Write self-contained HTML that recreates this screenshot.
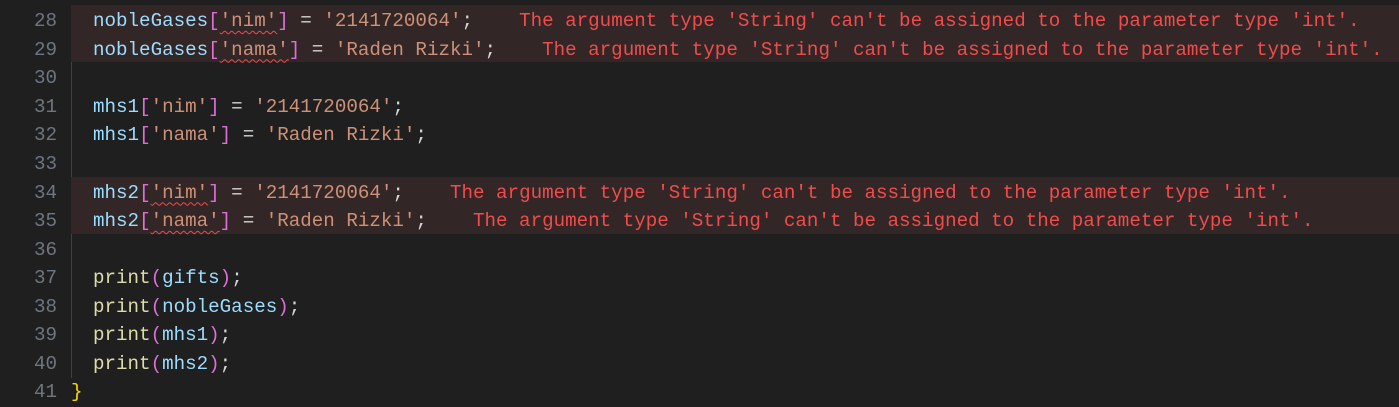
<!DOCTYPE html>
<html><head><style>
body{margin:0;background:#1f1f1f;width:1399px;height:405px;overflow:hidden;font-family:"Liberation Mono",monospace;font-size:19.2px;}
.l{position:absolute;left:0;width:1399px;height:28.55px;line-height:28.55px;white-space:pre;}
.n{position:absolute;left:0;width:57px;text-align:right;color:#6e7681;}
.c{position:absolute;left:93px;color:#d4d4d4;}
.hl{position:absolute;left:71px;right:0;height:28.55px;background:#332626;}
.g{position:absolute;left:71px;width:1px;background:#404040;top:7px;height:371px;}
.v{color:#9cdcfe}.s{color:#ce9178}.b{color:#da70d6}.f{color:#dcdcaa}.y{color:#ffd700}
.e{color:#f14c4c}
.w{text-decoration:underline wavy #f14c4c;text-decoration-thickness:1px;text-underline-offset:4px;}
</style></head><body>
<div class="g"></div>
<div class="hl" style="top:5px"></div><div class="hl" style="top:33.5px"></div>
<div class="hl" style="top:176.5px"></div><div class="hl" style="top:205px"></div>
<div class="l" style="top:7px"><span class="n">28</span><span class="c"><span class="v">nobleGases</span><span class="b">[</span><span class="s w">'nim'</span><span class="b">]</span> = <span class="s">'2141720064'</span>;    <span class="e">The argument type 'String' can't be assigned to the parameter type 'int'.</span></span></div>
<div class="l" style="top:35.5px"><span class="n">29</span><span class="c"><span class="v">nobleGases</span><span class="b">[</span><span class="s w">'nama'</span><span class="b">]</span> = <span class="s">'Raden Rizki'</span>;    <span class="e">The argument type 'String' can't be assigned to the parameter type 'int'.</span></span></div>
<div class="l" style="top:64px"><span class="n">30</span></div>
<div class="l" style="top:92.5px"><span class="n">31</span><span class="c"><span class="v">mhs1</span><span class="b">[</span><span class="s">'nim'</span><span class="b">]</span> = <span class="s">'2141720064'</span>;</span></div>
<div class="l" style="top:121px"><span class="n">32</span><span class="c"><span class="v">mhs1</span><span class="b">[</span><span class="s">'nama'</span><span class="b">]</span> = <span class="s">'Raden Rizki'</span>;</span></div>
<div class="l" style="top:149.5px"><span class="n">33</span></div>
<div class="l" style="top:178.5px"><span class="n">34</span><span class="c"><span class="v">mhs2</span><span class="b">[</span><span class="s w">'nim'</span><span class="b">]</span> = <span class="s">'2141720064'</span>;    <span class="e">The argument type 'String' can't be assigned to the parameter type 'int'.</span></span></div>
<div class="l" style="top:207px"><span class="n">35</span><span class="c"><span class="v">mhs2</span><span class="b">[</span><span class="s w">'nama'</span><span class="b">]</span> = <span class="s">'Raden Rizki'</span>;    <span class="e">The argument type 'String' can't be assigned to the parameter type 'int'.</span></span></div>
<div class="l" style="top:235.5px"><span class="n">36</span></div>
<div class="l" style="top:264px"><span class="n">37</span><span class="c"><span class="f">print</span><span class="b">(</span><span class="v">gifts</span><span class="b">)</span>;</span></div>
<div class="l" style="top:292.5px"><span class="n">38</span><span class="c"><span class="f">print</span><span class="b">(</span><span class="v">nobleGases</span><span class="b">)</span>;</span></div>
<div class="l" style="top:321px"><span class="n">39</span><span class="c"><span class="f">print</span><span class="b">(</span><span class="v">mhs1</span><span class="b">)</span>;</span></div>
<div class="l" style="top:349.5px"><span class="n">40</span><span class="c"><span class="f">print</span><span class="b">(</span><span class="v">mhs2</span><span class="b">)</span>;</span></div>
<div class="l" style="top:378px"><span class="n">41</span><span class="c y" style="left:71px">}</span></div>
</body></html>
